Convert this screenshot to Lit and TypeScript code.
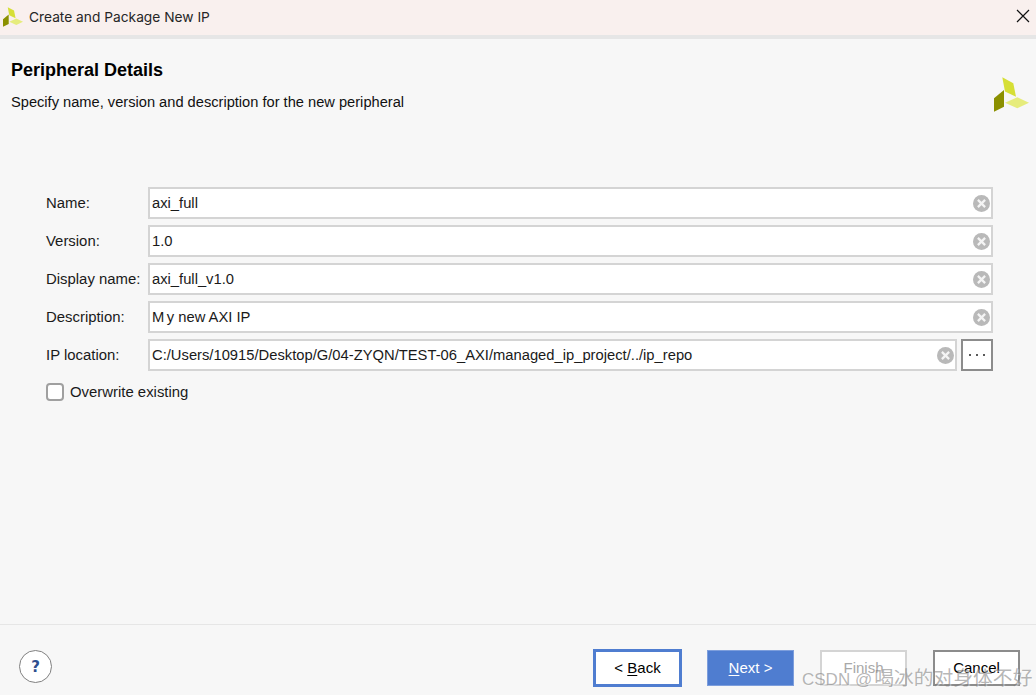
import { LitElement, html, css, svg } from "lit";
import { customElement } from "lit/decorators.js";

const logo = (cls: string) => html`<svg class=${cls} viewBox="0 0 35 35">
  ${svg`<polygon points="8.3,0.3 19.3,6.3 22,19.7 11,14.5" fill="#d6df36"/>
  <polygon points="10,13 10,29.7 0,34.7 0,21.3" fill="#8b9000"/>
  <polygon points="23.3,20.3 35,25.7 23.3,31.3 11,25.7" fill="#e6ec7c"/>`}
</svg>`;

const clearIcon = html`<svg class="clear" viewBox="0 0 16 16">
  ${svg`<circle cx="8" cy="8" r="8" fill="#b9b9b9"/>
  <path d="M4.6 4.6L11.4 11.4M11.4 4.6L4.6 11.4" stroke="#f4f4f4" stroke-width="2.1" fill="none"/>`}
</svg>`;

@customElement("app-root")
export class AppRoot extends LitElement {
  static styles = css`
    :host {
      display: flex;
      flex-direction: column;
      position: relative;
      width: 1036px;
      height: 695px;
      overflow: hidden;
      background: #f7f7f7;
      color: #1a1a1a;
      font-family: "Liberation Sans", Arial, sans-serif;
      font-size: 15px;
    }
    .titlebar {
      flex: none;
      height: 35px;
      box-sizing: content-box;
      display: flex;
      align-items: center;
      background: #f9f0ee;
      border-bottom: 4px solid #e6e6e6;
      padding-left: 3px;
    }
    .titlebar .small { width: 20px; height: 20px; margin-top: -2px; }
    .titlebar .title {
      margin-left: 6px;
      font-family: Inter, "Liberation Sans", sans-serif;
      font-size: 13.75px;
      color: #262626;
      margin-top: -2px;
    }
    .close { margin-left: auto; width: 14px; height: 14px; margin-right: 6px; margin-top: -3px; }
    .header {
      flex: none;
      display: flex;
      justify-content: space-between;
      height: 148px;
      box-sizing: border-box;
      padding: 21px 7px 0 11px;
    }
    h1 {
      margin: 0;
      font-size: 18px;
      line-height: 20px;
      font-weight: 700;
      color: #000;
    }
    .sub { margin-top: 13px; line-height: 18px; font-size: 14.65px; color: #111; }
    .big { width: 35px; height: 35px; margin-top: 17px; }
    .form {
      flex: 1;
      display: grid;
      grid-template-columns: 102px 1fr 32px;
      grid-auto-rows: 32px;
      row-gap: 6px;
      align-items: center;
      align-content: start;
      padding: 0 43px 0 46px;
    }
    label { font-size: 14.9px; padding-bottom: 1px; }
    .field {
      grid-column: 2 / 4;
      height: 32px;
      box-sizing: border-box;
      display: flex;
      align-items: center;
      justify-content: space-between;
      background: #fff;
      border: 2px solid #d4d4d4;
      padding: 0 1px 0 2px;
      color: #1a1a1a;
      font-size: 14.75px;
      white-space: nowrap;
    }
    .field.short { grid-column: 2; margin-right: 4px; }
    .kern { margin-left: 2.5px; }
    .clear { width: 17px; height: 17px; flex: none; }
    .dots {
      height: 32px;
      box-sizing: border-box;
      border: 2px solid #8c8c8c;
      background: #fff;
      display: flex;
      align-items: center;
      justify-content: center;
      gap: 5px;
    }
    .dots i { width: 2px; height: 2px; background: #222; border-radius: 50%; }
    .check {
      grid-column: 1 / 4;
      display: flex;
      align-items: center;
      gap: 6px;
      height: 20px;
      margin-top: -3px;
      font-size: 14.9px;
    }
    .box {
      width: 18px;
      height: 18px;
      box-sizing: border-box;
      border: 2px solid #a0a0a0;
      border-radius: 4px;
      background: #fff;
    }
    .footer {
      flex: none;
      height: 71px;
      box-sizing: border-box;
      border-top: 1px solid #e6e6e6;
      display: flex;
      align-items: flex-start;
      padding: 24px 16px 0 19px;
    }
    .help {
      width: 33px;
      height: 33px;
      box-sizing: border-box;
      border: 1.5px solid #808080;
      border-radius: 50%;
      background: #fff;
      color: #2f4f8f;
      font-family: "DejaVu Sans", sans-serif;
      font-weight: 700;
      font-size: 15px;
      display: flex;
      align-items: center;
      justify-content: center;
      margin-top: 1px;
    }
    .buttons { margin-left: auto; display: flex; align-items: flex-start; }
    .btn {
      height: 36px;
      width: 87px;
      box-sizing: border-box;
      display: flex;
      align-items: center;
      justify-content: center;
      white-space: pre;
      background: #fff;
      color: #000;
      margin-top: 1px;
      padding-bottom: 1px;
    }
    .back { width: 89px; height: 38px; border: 3px solid #4f7dd0; margin-top: 0; margin-right: 25px; }
    .next { background: #4f7dd0; color: #fff; border: 1px solid #7d9edc; margin-right: 26px; }
    .finish { border: 2px solid #d4d4d4; color: #a8a8a8; margin-right: 26px; }
    .cancel { border: 2px solid #8c8c8c; }
    u { text-underline-offset: 2px; }
    .mark {
      position: absolute;
      left: 802px;
      top: 666px;
      font-family: "Liberation Sans", "Noto Sans CJK SC", sans-serif;
      font-size: 17px;
      line-height: 24px;
      color: rgba(120, 120, 120, 0.55);
      white-space: nowrap;
      text-shadow: 1px 1px 1px rgba(255, 255, 255, 0.5);
    }
    .mark b { font-weight: 400; font-size: 19.8px; margin-left: 2px; }
  `;

  private row(label: string, value: unknown) {
    return html`<label>${label}</label>
      <div class="field"><span>${value}</span>${clearIcon}</div>`;
  }

  render() {
    return html`
      <div class="titlebar">
        ${logo("small")}
        <span class="title">Create and Package New IP</span>
        <svg class="close" viewBox="0 0 14 14">
          ${svg`<path d="M1 1L13 13M13 1L1 13" stroke="#111" stroke-width="1.2" fill="none"/>`}
        </svg>
      </div>
      <div class="header">
        <div>
          <h1>Peripheral Details</h1>
          <div class="sub">Specify name, version and description for the new peripheral</div>
        </div>
        ${logo("big")}
      </div>
      <div class="form">
        ${this.row("Name:", "axi_full")}
        ${this.row("Version:", "1.0")}
        ${this.row("Display name:", "axi_full_v1.0")}
        ${this.row("Description:", html`M<span class="kern">y</span> new AXI IP`)}
        <label>IP location:</label>
        <div class="field short">
          <span>C:/Users/10915/Desktop/G/04-ZYQN/TEST-06_AXI/managed_ip_project/../ip_repo</span>${clearIcon}
        </div>
        <div class="dots"><i></i><i></i><i></i></div>
        <div class="check"><div class="box"></div><span>Overwrite existing</span></div>
      </div>
      <div class="footer">
        <div class="help">?</div>
        <div class="buttons">
          <div class="btn back">&lt; <u>B</u>ack</div>
          <div class="btn next"><u>N</u>ext &gt;</div>
          <div class="btn finish">Finish</div>
          <div class="btn cancel">Cancel</div>
        </div>
      </div>
      <div class="mark">CSDN @<b>喝冰的对身体不好</b></div>
    `;
  }
}
